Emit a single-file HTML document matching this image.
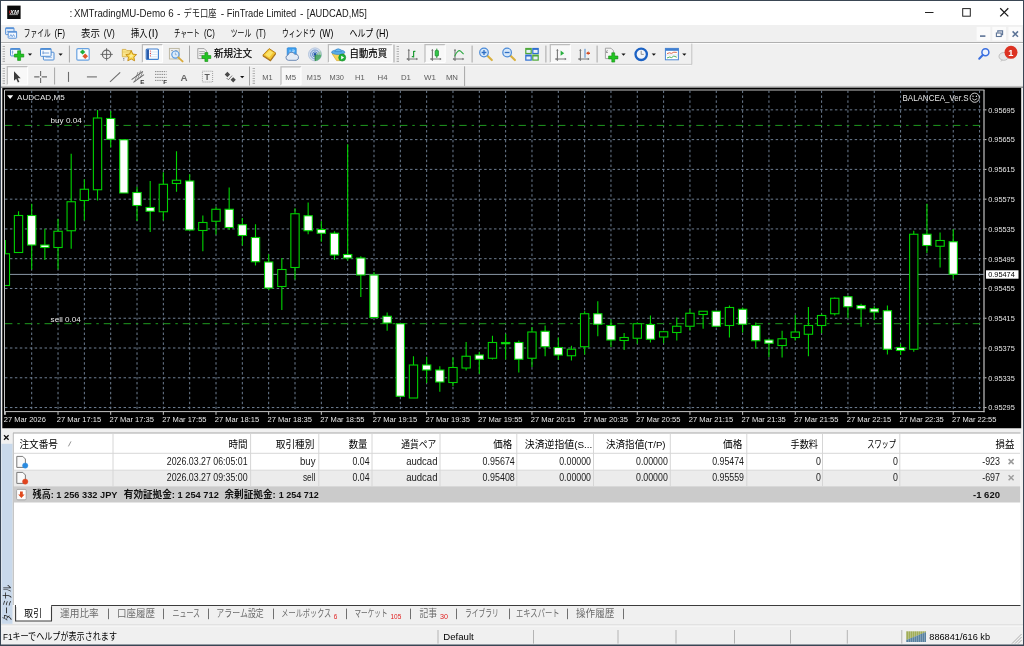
<!DOCTYPE html><html lang="ja"><head><meta charset="utf-8"><title>MT4</title><style>
*{box-sizing:border-box;margin:0;padding:0}
html,body{width:1024px;height:646px;overflow:hidden;background:#f0f0f0;font-family:"Liberation Sans","Noto Sans CJK JP",sans-serif;}
#win{position:absolute;left:0;top:0;width:1024px;height:646px;overflow:hidden;background:#f0f0f0;will-change:transform}
.abs{position:absolute}
svg.chart{position:absolute;left:0;top:0}
svg.chart text.ax{font-family:"Liberation Sans","Noto Sans CJK JP",sans-serif;font-size:7.6px;fill:#e8e8e8}
.t{position:absolute;white-space:nowrap;color:#000;line-height:1}
</style></head><body><div id="win">
<svg class="top" width="1024" height="90" viewBox="0 0 1024 90" font-family='"Liberation Sans","Noto Sans CJK JP",sans-serif' style="position:absolute;left:0;top:0">
<rect x="0" y="0" width="1024" height="25" fill="#ffffff"/>
<rect x="7.2" y="5.6" width="13.4" height="13.4" fill="#0a0a0a"/>
<text x="10" y="13.7" font-size="5" font-weight="bold" font-style="italic" fill="#ececec" textLength="8.8" lengthAdjust="spacingAndGlyphs">XM</text>
<rect x="9.2" y="10.6" width="1.1" height="2.8" fill="#d02020"/>
<rect x="9.4" y="14.2" width="8.6" height="0.9" fill="#a8a8a8"/>
<text x="69.4" y="16.8" font-size="10.3" fill="#1a1a1a">:</text>
<text x="74" y="16.8" font-size="10.3" fill="#1a1a1a" textLength="99.6" lengthAdjust="spacingAndGlyphs">XMTradingMU-Demo 6</text>
<text x="177" y="16.8" font-size="10.3" fill="#1a1a1a">-</text>
<text x="183.4" y="17" font-size="10.2" fill="#1a1a1a" textLength="33" lengthAdjust="spacingAndGlyphs">デモ口座</text>
<text x="220.8" y="16.8" font-size="10.3" fill="#1a1a1a">-</text>
<text x="226.7" y="16.8" font-size="10.3" fill="#1a1a1a" textLength="69.6" lengthAdjust="spacingAndGlyphs">FinTrade Limited</text>
<text x="300" y="16.8" font-size="10.3" fill="#1a1a1a">-</text>
<text x="306.8" y="16.8" font-size="10.3" fill="#1a1a1a" textLength="60" lengthAdjust="spacingAndGlyphs">[AUDCAD,M5]</text>
<line x1="925" y1="12.5" x2="933.5" y2="12.5" stroke="#222" stroke-width="1"/>
<rect x="962.7" y="8.6" width="7.6" height="7.6" fill="none" stroke="#222" stroke-width="1"/>
<path d="M1000.2 8.3 L1008.3 16.4 M1008.3 8.3 L1000.2 16.4" stroke="#1a1a1a" stroke-width="1.25" fill="none"/>
<rect x="0" y="25" width="1024" height="17.2" fill="#f0f0f0"/>
<rect x="5.6" y="27.8" width="8.4" height="6.8" rx="0.6" fill="#eaf2fc" stroke="#5b93d8" stroke-width="1"/>
<rect x="5.6" y="27.6" width="8.4" height="1.5" fill="#5b93d8"/>
<path d="M6.8 32.4 l1 -1.6 l1 1.6" fill="none" stroke="#5b93d8" stroke-width="0.7"/>
<rect x="8.2" y="31.4" width="8.4" height="6.8" rx="0.6" fill="#f4f8fe" stroke="#5b93d8" stroke-width="1"/>
<rect x="8.2" y="31.2" width="8.4" height="1.5" fill="#5b93d8"/>
<path d="M9.6 36.8 l1.3 -2.2 l1.3 2.2 l1.3 -2.2 l1.3 2.2" fill="none" stroke="#5b93d8" stroke-width="0.8"/>
<text x="23.8" y="37.3" font-size="9.9" fill="#000" textLength="26.8" lengthAdjust="spacingAndGlyphs">ファイル</text>
<text x="54.4" y="37.1" font-size="10.2" fill="#000" textLength="10.6" lengthAdjust="spacingAndGlyphs">(F)</text>
<text x="81" y="37.3" font-size="9.9" fill="#000" textLength="19" lengthAdjust="spacingAndGlyphs">表示</text>
<text x="103.8" y="37.1" font-size="10.2" fill="#000" textLength="11" lengthAdjust="spacingAndGlyphs">(V)</text>
<text x="131.1" y="37.3" font-size="9.9" fill="#000" textLength="16.4" lengthAdjust="spacingAndGlyphs">挿入</text>
<text x="148.3" y="37.1" font-size="10.2" fill="#000" textLength="9.8" lengthAdjust="spacingAndGlyphs">(I)</text>
<text x="174" y="37.3" font-size="9.9" fill="#000" textLength="25.8" lengthAdjust="spacingAndGlyphs">チャート</text>
<text x="204" y="37.1" font-size="10.2" fill="#000" textLength="10.7" lengthAdjust="spacingAndGlyphs">(C)</text>
<text x="230.8" y="37.3" font-size="9.9" fill="#000" textLength="20.4" lengthAdjust="spacingAndGlyphs">ツール</text>
<text x="256" y="37.1" font-size="10.2" fill="#000" textLength="9.7" lengthAdjust="spacingAndGlyphs">(T)</text>
<text x="282" y="37.3" font-size="9.9" fill="#000" textLength="33.8" lengthAdjust="spacingAndGlyphs">ウィンドウ</text>
<text x="319.5" y="37.1" font-size="10.2" fill="#000" textLength="13.9" lengthAdjust="spacingAndGlyphs">(W)</text>
<text x="349.5" y="37.3" font-size="9.9" fill="#000" textLength="23.8" lengthAdjust="spacingAndGlyphs">ヘルプ</text>
<text x="376" y="37.1" font-size="10.2" fill="#000" textLength="12.5" lengthAdjust="spacingAndGlyphs">(H)</text>
<rect x="976.6" y="26.9" width="13.8" height="13.7" fill="#fbfbfb"/>
<rect x="992.3" y="26.9" width="13.7" height="13.7" fill="#fbfbfb"/>
<rect x="1008.4" y="26.9" width="13.2" height="13.7" fill="#fbfbfb"/>
<rect x="980" y="35.3" width="5.4" height="1.6" fill="#5c7396"/>
<path d="M997.8 32.4 V30.9 H1002.6 V34.6 H1001.2" fill="none" stroke="#5c7396" stroke-width="1.1"/>
<rect x="996.4" y="33" width="4.8" height="3.5" fill="none" stroke="#5c7396" stroke-width="1.1"/>
<path d="M1012.6 31.4 L1018 36.8 M1018 31.4 L1012.6 36.8" stroke="#5c7396" stroke-width="1.5" fill="none"/>
<line x1="1" y1="42.5" x2="1023" y2="42.5" stroke="#b0b0b0" stroke-width="1"/>
<line x1="1" y1="43.5" x2="1023" y2="43.5" stroke="#fcfcfc" stroke-width="1"/>
<line x1="3.8" y1="46" x2="3.8" y2="62" stroke="#b0b0b0" stroke-width="2.4" stroke-dasharray="1.1 1.37"/>
<rect x="10.5" y="48.5" width="9.6" height="7.4" rx="0.8" fill="#f6fafe" stroke="#4e8cd4" stroke-width="1"/>
<rect x="10.5" y="48.3" width="9.6" height="1.6" fill="#4e8cd4"/>
<path d="M12.5 50.6 v4 M11.7 52 h1.8" stroke="#6a9ad6" stroke-width="0.7" fill="none"/>
<path d="M17.6 50.8 h3 v3.3 h3.2 v3 h-3.2 v3.3 h-3 v-3.3 h-3.2 v-3 h3.2z" fill="#22c422" stroke="#128a12" stroke-width="0.6"/>
<path d="M27.9 53.5 h4.2 l-2.1 2.2z" fill="#111"/>
<rect x="43.4" y="52.2" width="10.6" height="7.8" rx="0.8" fill="#eef4fc" stroke="#4e8cd4" stroke-width="1"/>
<rect x="40.5" y="48.5" width="10.6" height="7.8" rx="0.8" fill="#f6fafe" stroke="#4e8cd4" stroke-width="1"/>
<rect x="40.5" y="48.3" width="10.6" height="1.6" fill="#4e8cd4"/>
<path d="M42.5 53 h6.6 M43.1 50.8 v3.4" stroke="#5a8ed2" stroke-width="0.8" fill="none"/>
<path d="M45.5 57.4 h6.4" stroke="#7aa6dc" stroke-width="0.7" fill="none"/>
<path d="M58.5 53.5 h4.2 l-2.1 2.2z" fill="#111"/>
<line x1="69.4" y1="45.6" x2="69.4" y2="62.5" stroke="#a6a6a6" stroke-width="1"/>
<rect x="76.8" y="48.6" width="12.4" height="11.6" rx="1.2" fill="#f7fbff" stroke="#6aa2e0" stroke-width="1.2"/>
<path d="M82.6 49.4 l2.7 2.5 l-2.7 2.5 l-2.7 -2.5z" fill="#1fae3a"/>
<path d="M85.2 53.6 l2.8 2.7 l-2.8 2.7 l-2.8 -2.7z" fill="#e2562a"/>
<circle cx="106.6" cy="54.4" r="4.2" fill="none" stroke="#6a6a6a" stroke-width="1.2"/>
<path d="M106.6 48.2 v12.4 M100.4 54.4 h12.4" stroke="#5e5e5e" stroke-width="0.9" fill="none"/>
<path d="M122.3 49.4 h3.6 l1 1.2 h4.8 v6.2 h-9.4z" fill="#f9e48c" stroke="#d2aa3c" stroke-width="0.8"/>
<path d="M122.6 52 h9" stroke="#e6c85a" stroke-width="0.7"/>
<path d="M123.8 58 v2.8" stroke="#444" stroke-width="0.8" stroke-dasharray="0.9 0.7"/>
<path d="M131.2 50.8 l1.7 3.3 l3.7 0.5 l-2.7 2.5 l0.7 3.7 l-3.4 -1.8 l-3.4 1.8 l0.7 -3.7 l-2.7 -2.5 l3.7 -0.5z" fill="#f8d648" stroke="#c48a14" stroke-width="0.9"/>
<path d="M131.2 53.4 l0.8 1.6 l1.7 0.2 l-1.3 1.2 l0.3 1.7 l-1.5 -0.9 l-1.5 0.9 l0.3 -1.7 l-1.3 -1.2 l1.7 -0.2z" fill="#fcec98"/>
<rect x="142.4" y="44.6" width="20.19999999999999" height="17.799999999999997" fill="#f8f8f8"/>
<path d="M142.4 62.4 V44.6 H162.6" fill="none" stroke="#bcbcbc" stroke-width="1.2"/>
<path d="M142.4 62.4 H162.6 V44.6" fill="none" stroke="#ffffff" stroke-width="1"/>
<rect x="146.2" y="49" width="12.2" height="10.4" rx="1" fill="#ffffff" stroke="#3f7fd0" stroke-width="1.1"/>
<rect x="146.6" y="49.4" width="2.4" height="9.6" fill="#2a5caa"/>
<path d="M150 52 h7.6 M150 54.4 h7.6 M150 56.8 h7.6" stroke="#c7d8f2" stroke-width="0.7"/>
<circle cx="150.4" cy="51" r="0.6" fill="#e03030"/><circle cx="150.4" cy="53.4" r="0.6" fill="#e03030"/><circle cx="150.4" cy="55.8" r="0.6" fill="#e03030"/>
<rect x="169.4" y="48.4" width="9.8" height="10.6" fill="#efefef" stroke="#b9b39c" stroke-width="0.9"/>
<path d="M171 50.6 h2 M175 50.6 h2.4" stroke="#8a8a8a" stroke-width="0.7"/>
<circle cx="175.4" cy="54.6" r="3.6" fill="#dcecfb" stroke="#5b9be0" stroke-width="1.2"/>
<path d="M175.4 52.6 v2.2 h1.4" stroke="#7a9cc8" stroke-width="0.7" fill="none"/>
<path d="M178.2 57.4 l4.4 4" stroke="#d9a93a" stroke-width="1.9" stroke-linecap="round"/>
<line x1="189.5" y1="45.6" x2="189.5" y2="62.5" stroke="#a6a6a6" stroke-width="1"/>
<path d="M197.8 48.6 h6.4 l2.4 2.4 v7.6 h-8.8z" fill="#f2f2f2" stroke="#9a9a9a" stroke-width="0.9"/>
<path d="M199.2 51.6 h5.6 M199.2 53.6 h5.6 M199.2 55.6 h3" stroke="#8a8a8a" stroke-width="0.7"/>
<path d="M204.9 52.6 h2.9 v3 h3 v2.9 h-3 v3 h-2.9 v-3 h-3 v-2.9 h3z" fill="#22c422" stroke="#128a12" stroke-width="0.6"/>
<text x="213.9" y="57.3" font-size="10.1" fill="#000" textLength="38.2" lengthAdjust="spacingAndGlyphs" stroke="#000" stroke-width="0.2">新規注文</text>
<path d="M262.8 55.2 l6.4 -6.6 l6.6 4.4 l-5.4 7.2z" fill="#f4c430" stroke="#b07a18" stroke-width="0.9"/>
<path d="M262.8 55.2 l7.6 5 l5.4 -7.2 v1.6 l-5.2 7 l-7.8 -5z" fill="#a8701a"/>
<path d="M265.2 54.8 l4.4 -4.6 l3.6 2.4 l-4 4.8z" fill="#fbe36a"/>
<rect x="287.2" y="47.8" width="9" height="7.6" rx="0.8" fill="#3ea2f2" stroke="#2a80d0" stroke-width="0.7"/>
<path d="M290 49.8 v3.4 M292.2 50 h2 v1.6 h-2 v1.8 h2" stroke="#d6ecff" stroke-width="0.7" fill="none"/>
<path d="M288.4 60.3 a2.7 2.7 0 0 1 -0.4 -5.3 a3.5 3.5 0 0 1 6.6 -0.8 a3 3 0 0 1 1.6 6.1z" fill="#e4ebf5" stroke="#5f7fae" stroke-width="0.9"/>
<circle cx="315" cy="54.4" r="6.5" fill="#d5e0f0" stroke="#a9bcd8" stroke-width="0.8"/>
<circle cx="315" cy="54.4" r="4.4" fill="none" stroke="#7097d0" stroke-width="1"/>
<circle cx="315" cy="54.4" r="2.5" fill="none" stroke="#4f7fc6" stroke-width="1"/>
<path d="M315 54.4 L321.5 54.4 A6.5 6.5 0 0 1 315 60.9z" fill="#48a862" fill-opacity="0.9"/>
<path d="M315 54.4 L320.6 51 A6.5 6.5 0 0 1 321.5 54.4z" fill="#9cc8a4" fill-opacity="0.8"/>
<circle cx="315" cy="54.4" r="1.3" fill="#1f52a8"/>
<path d="M315.2 55 v5.9" stroke="#2f8044" stroke-width="1"/>
<rect x="328.4" y="44.6" width="63.80000000000001" height="17.799999999999997" fill="#f8f8f8"/>
<path d="M328.4 62.4 V44.6 H392.2" fill="none" stroke="#bcbcbc" stroke-width="1.2"/>
<path d="M328.4 62.4 H392.2 V44.6" fill="none" stroke="#ffffff" stroke-width="1"/>
<path d="M332 53.6 l6 -2 l6.2 2 l-4 7 h-3.6z" fill="#f6d458" stroke="#d4a628" stroke-width="0.7"/>
<ellipse cx="338.2" cy="52.2" rx="6.6" ry="2.3" fill="#58aee8" stroke="#3a86c8" stroke-width="0.7"/>
<path d="M334.8 51.6 a3.5 3.6 0 0 1 6.8 0z" fill="#6abaf0" stroke="#3a86c8" stroke-width="0.7"/>
<circle cx="342.2" cy="57.6" r="3.5" fill="#1fb038" stroke="#108a22" stroke-width="0.6"/>
<path d="M341.2 55.8 l2.9 1.8 l-2.9 1.8z" fill="#fff"/>
<text x="349.6" y="57.4" font-size="10.2" fill="#000" textLength="37.5" lengthAdjust="spacingAndGlyphs" stroke="#000" stroke-width="0.2">自動売買</text>
<line x1="394" y1="44.6" x2="394" y2="62.4" stroke="#a6a6a6" stroke-width="1"/>
<line x1="397.8" y1="46" x2="397.8" y2="62" stroke="#b0b0b0" stroke-width="2.4" stroke-dasharray="1.1 1.37"/>
<path d="M408.8 49.6 v11 M406.8 59.0 h10.6" stroke="#777" stroke-width="1.1" fill="none"/>
<path d="M408.8 49.0 l-1.2 1.8 h2.4z M418.0 59.0 l-1.8 -1.2 v2.4z M406.40000000000003 59.0 l1.6 -1.1 v2.2z M408.8 61.0 l-1.1 -1.5 h2.2z" fill="#777"/>
<path d="M413.6 51 v6.4 M413.6 51.4 h1.8 M411.8 56.6 h1.8" stroke="#1f9c36" stroke-width="1.2" fill="none"/>
<rect x="425" y="44.6" width="20.19999999999999" height="17.799999999999997" fill="#f8f8f8"/>
<path d="M425 62.4 V44.6 H445.2" fill="none" stroke="#bcbcbc" stroke-width="1.2"/>
<path d="M425 62.4 H445.2 V44.6" fill="none" stroke="#ffffff" stroke-width="1"/>
<path d="M432.4 49.6 v11 M430.4 59.0 h10.6" stroke="#777" stroke-width="1.1" fill="none"/>
<path d="M432.4 49.0 l-1.2 1.8 h2.4z M441.59999999999997 59.0 l-1.8 -1.2 v2.4z M430.0 59.0 l1.6 -1.1 v2.2z M432.4 61.0 l-1.1 -1.5 h2.2z" fill="#777"/>
<rect x="435.2" y="50.4" width="3.2" height="5.6" rx="0.6" fill="#35c84a" stroke="#178a2a" stroke-width="0.8"/>
<path d="M436.8 48.6 v1.8 M436.8 56 v2" stroke="#178a2a" stroke-width="0.9"/>
<path d="M455 49.6 v11 M453 59.0 h10.6" stroke="#777" stroke-width="1.1" fill="none"/>
<path d="M455 49.0 l-1.2 1.8 h2.4z M464.2 59.0 l-1.8 -1.2 v2.4z M452.6 59.0 l1.6 -1.1 v2.2z M455 61.0 l-1.1 -1.5 h2.2z" fill="#777"/>
<path d="M454.6 56.4 q3.4 -7.6 6 -5.2 q1.6 1.6 3 3" stroke="#2aa840" stroke-width="1.1" fill="none"/>
<line x1="472.1" y1="45.6" x2="472.1" y2="62.5" stroke="#a6a6a6" stroke-width="1"/>
<path d="M487.4 55.8 l4.4 4.2" stroke="#d8b040" stroke-width="2.2" stroke-linecap="round"/>
<circle cx="484" cy="52.5" r="4.3" fill="#d6e8fa" stroke="#4a8ad8" stroke-width="1.2"/>
<path d="M481.6 52.5 h4.8 M484 50.1 v4.8" stroke="#2f6fc4" stroke-width="1.3"/>
<path d="M510.5 55.8 l4.4 4.2" stroke="#d8b040" stroke-width="2.2" stroke-linecap="round"/>
<circle cx="507.1" cy="52.5" r="4.3" fill="#d6e8fa" stroke="#4a8ad8" stroke-width="1.2"/>
<path d="M504.70000000000005 52.5 h4.8" stroke="#2f6fc4" stroke-width="1.3"/>
<rect x="525.2" y="47.9" width="6.6" height="6.2" fill="#4ea83a"/>
<rect x="526.4000000000001" y="49.9" width="4.2" height="3" fill="#e8f0fa"/>
<rect x="532.2" y="47.9" width="6.6" height="6.2" fill="#2f6fd0"/>
<rect x="533.4000000000001" y="49.9" width="4.2" height="3" fill="#e8f0fa"/>
<rect x="525.2" y="54.5" width="6.6" height="6.2" fill="#2f6fd0"/>
<rect x="526.4000000000001" y="56.5" width="4.2" height="3" fill="#e8f0fa"/>
<rect x="532.2" y="54.5" width="6.6" height="6.2" fill="#4ea83a"/>
<rect x="533.4000000000001" y="56.5" width="4.2" height="3" fill="#e8f0fa"/>
<line x1="545.9" y1="45.6" x2="545.9" y2="62.5" stroke="#a6a6a6" stroke-width="1"/>
<rect x="550.3" y="44.6" width="20.0" height="17.799999999999997" fill="#f8f8f8"/>
<path d="M550.3 62.4 V44.6 H570.3" fill="none" stroke="#bcbcbc" stroke-width="1.2"/>
<path d="M550.3 62.4 H570.3 V44.6" fill="none" stroke="#ffffff" stroke-width="1"/>
<path d="M557.4 49.6 v11 M555.4 59.0 h10.6" stroke="#777" stroke-width="1.1" fill="none"/>
<path d="M557.4 49.0 l-1.2 1.8 h2.4z M566.6 59.0 l-1.8 -1.2 v2.4z M555.0 59.0 l1.6 -1.1 v2.2z M557.4 61.0 l-1.1 -1.5 h2.2z" fill="#777"/>
<path d="M560.6 50.6 l3.6 2.6 l-3.6 2.6z" fill="#2ab040"/>
<path d="M580.4 49.6 v11 M578.4 59.0 h10.6" stroke="#777" stroke-width="1.1" fill="none"/>
<path d="M580.4 49.0 l-1.2 1.8 h2.4z M589.6 59.0 l-1.8 -1.2 v2.4z M578.0 59.0 l1.6 -1.1 v2.2z M580.4 61.0 l-1.1 -1.5 h2.2z" fill="#777"/>
<path d="M585 48.8 v9" stroke="#4a86c8" stroke-width="1"/>
<path d="M586 53.2 l2.6 -1.9 v1.2 h1.4 v1.4 h-1.4 v1.2z" fill="#d24a20"/>
<line x1="597.1" y1="45.6" x2="597.1" y2="62.5" stroke="#a6a6a6" stroke-width="1"/>
<path d="M605.4 48.2 h5.6 l2.4 2.4 v8 h-8z" fill="#f4f4f4" stroke="#9a9a9a" stroke-width="0.9"/>
<path d="M607.6 50.4 q-1 0 -1 1 v1.4 M608 52.4 h-1.8" stroke="#777" stroke-width="0.7" fill="none"/>
<path d="M611.8 52.8 h2.9 v3.2 h3.2 v2.9 h-3.2 v3.2 h-2.9 v-3.2 h-3.2 v-2.9 h3.2z" fill="#22c422" stroke="#128a12" stroke-width="0.6"/>
<path d="M621.4 53.5 h4.2 l-2.1 2.2z" fill="#111"/>
<circle cx="641.2" cy="54.3" r="5.7" fill="#f2f5fa" stroke="#1c62c4" stroke-width="2.3"/>
<path d="M641.2 50.8 v3.6 h2.6" stroke="#8a8a8a" stroke-width="0.9" fill="none"/>
<path d="M651.6999999999999 53.5 h4.2 l-2.1 2.2z" fill="#111"/>
<rect x="665.4" y="48.4" width="13" height="11.4" fill="#ffffff" stroke="#4a86d4" stroke-width="1"/>
<rect x="665.4" y="48.4" width="13" height="2.4" fill="#3f7fd0"/>
<path d="M667 53.6 l2.4 -0.8 l2 0.6 l2.4 -1.2 l3 0.2" stroke="#d85a3a" stroke-width="0.9" fill="none"/>
<path d="M667 58 l2.6 -1 l2 0.6 l2.2 -1.6 l3 1.2" stroke="#3aa84a" stroke-width="0.9" fill="none"/>
<path d="M666 55 h12" stroke="#c4d4ea" stroke-width="0.6"/>
<path d="M682.1999999999999 53.5 h4.2 l-2.1 2.2z" fill="#111"/>
<path d="M1 64.4 H691.8 V43.6" fill="none" stroke="#c2c2c2" stroke-width="1"/>
<path d="M1 65.3 H691" fill="none" stroke="#fbfbfb" stroke-width="0.8"/>
<circle cx="985.4" cy="52.2" r="3.5" fill="#eef4ff" stroke="#3a6fe0" stroke-width="1.5"/>
<path d="M982.8 55 l-3.6 3.8" stroke="#3a6fe0" stroke-width="2" stroke-linecap="round"/>
<ellipse cx="1003.8" cy="56.4" rx="4.8" ry="3.9" fill="#e6e6e6" stroke="#b4b4b4" stroke-width="0.8"/>
<path d="M1001.4 59.4 l-1 2.6 l3 -2z" fill="#c8c8c8"/>
<circle cx="1011" cy="52.3" r="6.5" fill="#dc3222"/>
<text x="1010.8" y="55.6" font-size="9.2" font-weight="bold" fill="#fff" text-anchor="middle">1</text>
<line x1="3.8" y1="68" x2="3.8" y2="84" stroke="#b0b0b0" stroke-width="2.4" stroke-dasharray="1.1 1.37"/>
<rect x="7.3" y="66.6" width="20.4" height="18.200000000000003" fill="#f8f8f8"/>
<path d="M7.3 84.8 V66.6 H27.7" fill="none" stroke="#bcbcbc" stroke-width="1.2"/>
<path d="M7.3 84.8 H27.7 V66.6" fill="none" stroke="#ffffff" stroke-width="1"/>
<path d="M14 71.2 v9.6 l2.2 -2 l1.7 3.7 l1.5 -0.7 l-1.7 -3.6 h3z" fill="#3c3c3c"/>
<path d="M40.6 71.1 v4.9 M40.6 77.9 v5 M34.2 76.9 h5.3 M41.7 76.9 h5.3" stroke="#6c6c6c" stroke-width="1.1" fill="none"/>
<line x1="54.6" y1="67.5" x2="54.6" y2="84.5" stroke="#a6a6a6" stroke-width="1"/>
<path d="M68.5 71.9 v10" stroke="#6c6c6c" stroke-width="1.1"/>
<path d="M86.9 76.9 h10" stroke="#6c6c6c" stroke-width="1.1"/>
<path d="M110 81.9 L120.2 72.4" stroke="#6c6c6c" stroke-width="1.1"/>
<path d="M131.6 79.6 L142.8 71.4 M133.4 82.4 L144 74.6" stroke="#6c6c6c" stroke-width="1.1"/>
<path d="M134.6 82 L138 72 M137.4 80 L140.6 70.6 M140.2 78 L142.6 71.6" stroke="#6c6c6c" stroke-width="0.7"/>
<text x="140.2" y="84" font-size="6.2" font-weight="bold" fill="#333">E</text>
<path d="M155 71.6 h11.6 M155 74.4 h11.6 M155 77.4 h11.6 M155 80.4 h8" stroke="#6c6c6c" stroke-width="0.8" stroke-dasharray="1.4 0.8"/>
<text x="163.2" y="84" font-size="6.2" font-weight="bold" fill="#333">F</text>
<text x="180.5" y="80.8" font-size="9.8" font-weight="bold" fill="#686868">A</text>
<rect x="202.4" y="71.2" width="10.2" height="10.8" fill="none" stroke="#8a8a8a" stroke-width="0.8" stroke-dasharray="1 1"/>
<text x="204.6" y="80" font-size="8.6" font-weight="bold" fill="#5c5c5c">T</text>
<path d="M227.4 71.8 l2.7 2.7 l-2.7 2.7 l-2.7 -2.7z M233.2 77.2 l2.6 2.6 l-2.6 2.6 l-2.6 -2.6z" fill="#4a4a4a"/>
<path d="M226.6 78 l1.8 1.8 l3.6 -4.2" stroke="#5a5a5a" stroke-width="0.8" fill="none"/>
<path d="M240.1 76 h4.2 l-2.1 2.2z" fill="#111"/>
<line x1="249.5" y1="66.5" x2="249.5" y2="85.6" stroke="#a6a6a6" stroke-width="1"/>
<line x1="253.8" y1="68" x2="253.8" y2="84" stroke="#b0b0b0" stroke-width="2.4" stroke-dasharray="1.1 1.37"/>
<text x="262.2" y="79.8" font-size="8.1" fill="#5a5a5a" textLength="10.4" lengthAdjust="spacingAndGlyphs">M1</text>
<rect x="281" y="66.9" width="20" height="18.099999999999994" fill="#f8f8f8"/>
<path d="M281 85 V66.9 H301" fill="none" stroke="#bcbcbc" stroke-width="1.2"/>
<path d="M281 85 H301 V66.9" fill="none" stroke="#ffffff" stroke-width="1"/>
<text x="285.2" y="79.8" font-size="8.1" fill="#5a5a5a" textLength="10.8" lengthAdjust="spacingAndGlyphs">M5</text>
<text x="306.8" y="79.8" font-size="8.1" fill="#5a5a5a" textLength="14.2" lengthAdjust="spacingAndGlyphs">M15</text>
<text x="329.5" y="79.8" font-size="8.1" fill="#5a5a5a" textLength="14.4" lengthAdjust="spacingAndGlyphs">M30</text>
<text x="355" y="79.8" font-size="8.1" fill="#5a5a5a" textLength="9.6" lengthAdjust="spacingAndGlyphs">H1</text>
<text x="377.5" y="79.8" font-size="8.1" fill="#5a5a5a" textLength="10" lengthAdjust="spacingAndGlyphs">H4</text>
<text x="400.9" y="79.8" font-size="8.1" fill="#5a5a5a" textLength="10" lengthAdjust="spacingAndGlyphs">D1</text>
<text x="424" y="79.8" font-size="8.1" fill="#5a5a5a" textLength="11.9" lengthAdjust="spacingAndGlyphs">W1</text>
<text x="445.9" y="79.8" font-size="8.1" fill="#5a5a5a" textLength="12.1" lengthAdjust="spacingAndGlyphs">MN</text>
<line x1="464.6" y1="66.3" x2="464.6" y2="86" stroke="#a6a6a6" stroke-width="1"/>
<rect x="1" y="85.9" width="1022" height="0.8" fill="#d0d0d0"/>
<rect x="1" y="86.6" width="1022" height="1.4" fill="#9a9a9a"/>
</svg>
<svg class="chart" width="1024" height="646" viewBox="0 0 1024 646"><rect x="2.3" y="87.9" width="1018.9" height="340.6" fill="#000"/>
<defs><clipPath id="plot"><rect x="5" y="90.5" width="979" height="320.5"/></clipPath></defs>
<g clip-path="url(#plot)">
<line x1="5" y1="109.85" x2="984" y2="109.85" stroke="#6e7e92" stroke-width="1" stroke-dasharray="2.47 2.47"/>
<line x1="5" y1="139.62" x2="984" y2="139.62" stroke="#6e7e92" stroke-width="1" stroke-dasharray="2.47 2.47"/>
<line x1="5" y1="169.39" x2="984" y2="169.39" stroke="#6e7e92" stroke-width="1" stroke-dasharray="2.47 2.47"/>
<line x1="5" y1="199.16" x2="984" y2="199.16" stroke="#6e7e92" stroke-width="1" stroke-dasharray="2.47 2.47"/>
<line x1="5" y1="228.93" x2="984" y2="228.93" stroke="#6e7e92" stroke-width="1" stroke-dasharray="2.47 2.47"/>
<line x1="5" y1="258.70" x2="984" y2="258.70" stroke="#6e7e92" stroke-width="1" stroke-dasharray="2.47 2.47"/>
<line x1="5" y1="288.47" x2="984" y2="288.47" stroke="#6e7e92" stroke-width="1" stroke-dasharray="2.47 2.47"/>
<line x1="84" y1="318.24" x2="984" y2="318.24" stroke="#6e7e92" stroke-width="1" stroke-dasharray="2.47 2.47"/>
<line x1="5" y1="348.01" x2="984" y2="348.01" stroke="#6e7e92" stroke-width="1" stroke-dasharray="2.47 2.47"/>
<line x1="5" y1="377.78" x2="984" y2="377.78" stroke="#6e7e92" stroke-width="1" stroke-dasharray="2.47 2.47"/>
<line x1="5" y1="407.55" x2="984" y2="407.55" stroke="#6e7e92" stroke-width="1" stroke-dasharray="2.47 2.47"/>
<line x1="31.70" y1="90.5" x2="31.70" y2="411" stroke="#6e7e92" stroke-width="1" stroke-dasharray="2.47 2.47"/>
<line x1="58.03" y1="90.5" x2="58.03" y2="411" stroke="#6e7e92" stroke-width="1" stroke-dasharray="2.47 2.47"/>
<line x1="84.36" y1="90.5" x2="84.36" y2="411" stroke="#6e7e92" stroke-width="1" stroke-dasharray="2.47 2.47"/>
<line x1="110.69" y1="90.5" x2="110.69" y2="411" stroke="#6e7e92" stroke-width="1" stroke-dasharray="2.47 2.47"/>
<line x1="137.02" y1="90.5" x2="137.02" y2="411" stroke="#6e7e92" stroke-width="1" stroke-dasharray="2.47 2.47"/>
<line x1="163.35" y1="90.5" x2="163.35" y2="411" stroke="#6e7e92" stroke-width="1" stroke-dasharray="2.47 2.47"/>
<line x1="189.68" y1="90.5" x2="189.68" y2="411" stroke="#6e7e92" stroke-width="1" stroke-dasharray="2.47 2.47"/>
<line x1="216.01" y1="90.5" x2="216.01" y2="411" stroke="#6e7e92" stroke-width="1" stroke-dasharray="2.47 2.47"/>
<line x1="242.34" y1="90.5" x2="242.34" y2="411" stroke="#6e7e92" stroke-width="1" stroke-dasharray="2.47 2.47"/>
<line x1="268.67" y1="90.5" x2="268.67" y2="411" stroke="#6e7e92" stroke-width="1" stroke-dasharray="2.47 2.47"/>
<line x1="295.00" y1="90.5" x2="295.00" y2="411" stroke="#6e7e92" stroke-width="1" stroke-dasharray="2.47 2.47"/>
<line x1="321.33" y1="90.5" x2="321.33" y2="411" stroke="#6e7e92" stroke-width="1" stroke-dasharray="2.47 2.47"/>
<line x1="347.66" y1="90.5" x2="347.66" y2="411" stroke="#6e7e92" stroke-width="1" stroke-dasharray="2.47 2.47"/>
<line x1="373.99" y1="90.5" x2="373.99" y2="411" stroke="#6e7e92" stroke-width="1" stroke-dasharray="2.47 2.47"/>
<line x1="400.32" y1="90.5" x2="400.32" y2="411" stroke="#6e7e92" stroke-width="1" stroke-dasharray="2.47 2.47"/>
<line x1="426.65" y1="90.5" x2="426.65" y2="411" stroke="#6e7e92" stroke-width="1" stroke-dasharray="2.47 2.47"/>
<line x1="452.98" y1="90.5" x2="452.98" y2="411" stroke="#6e7e92" stroke-width="1" stroke-dasharray="2.47 2.47"/>
<line x1="479.31" y1="90.5" x2="479.31" y2="411" stroke="#6e7e92" stroke-width="1" stroke-dasharray="2.47 2.47"/>
<line x1="505.64" y1="90.5" x2="505.64" y2="411" stroke="#6e7e92" stroke-width="1" stroke-dasharray="2.47 2.47"/>
<line x1="531.97" y1="90.5" x2="531.97" y2="411" stroke="#6e7e92" stroke-width="1" stroke-dasharray="2.47 2.47"/>
<line x1="558.30" y1="90.5" x2="558.30" y2="411" stroke="#6e7e92" stroke-width="1" stroke-dasharray="2.47 2.47"/>
<line x1="584.63" y1="90.5" x2="584.63" y2="411" stroke="#6e7e92" stroke-width="1" stroke-dasharray="2.47 2.47"/>
<line x1="610.96" y1="90.5" x2="610.96" y2="411" stroke="#6e7e92" stroke-width="1" stroke-dasharray="2.47 2.47"/>
<line x1="637.29" y1="90.5" x2="637.29" y2="411" stroke="#6e7e92" stroke-width="1" stroke-dasharray="2.47 2.47"/>
<line x1="663.62" y1="90.5" x2="663.62" y2="411" stroke="#6e7e92" stroke-width="1" stroke-dasharray="2.47 2.47"/>
<line x1="689.95" y1="90.5" x2="689.95" y2="411" stroke="#6e7e92" stroke-width="1" stroke-dasharray="2.47 2.47"/>
<line x1="716.28" y1="90.5" x2="716.28" y2="411" stroke="#6e7e92" stroke-width="1" stroke-dasharray="2.47 2.47"/>
<line x1="742.61" y1="90.5" x2="742.61" y2="411" stroke="#6e7e92" stroke-width="1" stroke-dasharray="2.47 2.47"/>
<line x1="768.94" y1="90.5" x2="768.94" y2="411" stroke="#6e7e92" stroke-width="1" stroke-dasharray="2.47 2.47"/>
<line x1="795.27" y1="90.5" x2="795.27" y2="411" stroke="#6e7e92" stroke-width="1" stroke-dasharray="2.47 2.47"/>
<line x1="821.60" y1="90.5" x2="821.60" y2="411" stroke="#6e7e92" stroke-width="1" stroke-dasharray="2.47 2.47"/>
<line x1="847.93" y1="90.5" x2="847.93" y2="411" stroke="#6e7e92" stroke-width="1" stroke-dasharray="2.47 2.47"/>
<line x1="874.26" y1="90.5" x2="874.26" y2="411" stroke="#6e7e92" stroke-width="1" stroke-dasharray="2.47 2.47"/>
<line x1="900.59" y1="90.5" x2="900.59" y2="411" stroke="#6e7e92" stroke-width="1" stroke-dasharray="2.47 2.47"/>
<line x1="926.92" y1="90.5" x2="926.92" y2="411" stroke="#6e7e92" stroke-width="1" stroke-dasharray="2.47 2.47"/>
<line x1="953.25" y1="90.5" x2="953.25" y2="411" stroke="#6e7e92" stroke-width="1" stroke-dasharray="2.47 2.47"/>
<line x1="979.58" y1="90.5" x2="979.58" y2="411" stroke="#6e7e92" stroke-width="1" stroke-dasharray="2.47 2.47"/>
<line x1="5" y1="274.4" x2="984" y2="274.4" stroke="#8a97a6" stroke-width="1"/>
<line x1="5" y1="125.4" x2="984" y2="125.4" stroke="#1f9a1f" stroke-width="1" stroke-dasharray="7.4 4.94 2.47 4.94"/>
<line x1="5" y1="323.7" x2="984" y2="323.7" stroke="#1f9a1f" stroke-width="1" stroke-dasharray="7.4 4.94 2.47 4.94"/>
<line x1="5.37" y1="240" x2="5.37" y2="285.5" stroke="#00d200" stroke-width="1.12"/>
<rect x="1.22" y="253.75" width="8.3" height="31.75" fill="#000" stroke="#00d200" stroke-width="1.1"/>
<line x1="18.54" y1="211.25" x2="18.54" y2="252.5" stroke="#00d200" stroke-width="1.12"/>
<rect x="14.38" y="215.5" width="8.3" height="37.00" fill="#000" stroke="#00d200" stroke-width="1.1"/>
<line x1="31.70" y1="203.75" x2="31.70" y2="269.5" stroke="#00d200" stroke-width="1.12"/>
<rect x="27.55" y="215.5" width="8.3" height="29.50" fill="#fff" stroke="#00d200" stroke-width="1.1"/>
<line x1="44.86" y1="228.75" x2="44.86" y2="260" stroke="#00d200" stroke-width="1.12"/>
<rect x="40.71" y="245" width="8.3" height="2.50" fill="#fff" stroke="#00d200" stroke-width="1.1"/>
<line x1="58.03" y1="218.75" x2="58.03" y2="269.5" stroke="#00d200" stroke-width="1.12"/>
<rect x="53.88" y="231.25" width="8.3" height="16.25" fill="#000" stroke="#00d200" stroke-width="1.1"/>
<line x1="71.19" y1="153.75" x2="71.19" y2="248.75" stroke="#00d200" stroke-width="1.12"/>
<rect x="67.04" y="201.75" width="8.3" height="29.00" fill="#000" stroke="#00d200" stroke-width="1.1"/>
<line x1="84.36" y1="179.25" x2="84.36" y2="220.5" stroke="#00d200" stroke-width="1.12"/>
<rect x="80.21" y="189.25" width="8.3" height="11.25" fill="#000" stroke="#00d200" stroke-width="1.1"/>
<line x1="97.53" y1="110" x2="97.53" y2="200.5" stroke="#00d200" stroke-width="1.12"/>
<rect x="93.38" y="118" width="8.3" height="71.75" fill="#000" stroke="#00d200" stroke-width="1.1"/>
<line x1="110.69" y1="111" x2="110.69" y2="147.5" stroke="#00d200" stroke-width="1.12"/>
<rect x="106.54" y="118.5" width="8.3" height="20.75" fill="#fff" stroke="#00d200" stroke-width="1.1"/>
<line x1="123.85" y1="139.5" x2="123.85" y2="193" stroke="#00d200" stroke-width="1.12"/>
<rect x="119.70" y="139.75" width="8.3" height="53.25" fill="#fff" stroke="#00d200" stroke-width="1.1"/>
<line x1="137.02" y1="186.75" x2="137.02" y2="221" stroke="#00d200" stroke-width="1.12"/>
<rect x="132.87" y="192.5" width="8.3" height="13.00" fill="#fff" stroke="#00d200" stroke-width="1.1"/>
<line x1="150.19" y1="181" x2="150.19" y2="232" stroke="#00d200" stroke-width="1.12"/>
<rect x="146.03" y="207.5" width="8.3" height="3.75" fill="#fff" stroke="#00d200" stroke-width="1.1"/>
<line x1="163.35" y1="172.25" x2="163.35" y2="220.5" stroke="#00d200" stroke-width="1.12"/>
<rect x="159.20" y="184.25" width="8.3" height="27.50" fill="#000" stroke="#00d200" stroke-width="1.1"/>
<line x1="176.51" y1="151.25" x2="176.51" y2="191.75" stroke="#00d200" stroke-width="1.12"/>
<rect x="172.36" y="180.25" width="8.3" height="3.25" fill="#000" stroke="#00d200" stroke-width="1.1"/>
<line x1="189.68" y1="174.25" x2="189.68" y2="230.5" stroke="#00d200" stroke-width="1.12"/>
<rect x="185.53" y="181" width="8.3" height="49.00" fill="#fff" stroke="#00d200" stroke-width="1.1"/>
<line x1="202.84" y1="215.5" x2="202.84" y2="251.25" stroke="#00d200" stroke-width="1.12"/>
<rect x="198.69" y="222.5" width="8.3" height="8.00" fill="#000" stroke="#00d200" stroke-width="1.1"/>
<line x1="216.01" y1="206.75" x2="216.01" y2="234.5" stroke="#00d200" stroke-width="1.12"/>
<rect x="211.86" y="209.25" width="8.3" height="12.00" fill="#000" stroke="#00d200" stroke-width="1.1"/>
<line x1="229.17" y1="187.5" x2="229.17" y2="230" stroke="#00d200" stroke-width="1.12"/>
<rect x="225.02" y="209.25" width="8.3" height="18.25" fill="#fff" stroke="#00d200" stroke-width="1.1"/>
<line x1="242.34" y1="218" x2="242.34" y2="245.5" stroke="#00d200" stroke-width="1.12"/>
<rect x="238.19" y="224.75" width="8.3" height="10.75" fill="#fff" stroke="#00d200" stroke-width="1.1"/>
<line x1="255.50" y1="224.25" x2="255.50" y2="265.5" stroke="#00d200" stroke-width="1.12"/>
<rect x="251.35" y="237.5" width="8.3" height="24.25" fill="#fff" stroke="#00d200" stroke-width="1.1"/>
<line x1="268.67" y1="254.25" x2="268.67" y2="290" stroke="#00d200" stroke-width="1.12"/>
<rect x="264.52" y="262" width="8.3" height="26.00" fill="#fff" stroke="#00d200" stroke-width="1.1"/>
<line x1="281.83" y1="258" x2="281.83" y2="310" stroke="#00d200" stroke-width="1.12"/>
<rect x="277.69" y="269.5" width="8.3" height="17.00" fill="#000" stroke="#00d200" stroke-width="1.1"/>
<line x1="295.00" y1="208.25" x2="295.00" y2="279.5" stroke="#00d200" stroke-width="1.12"/>
<rect x="290.85" y="213.75" width="8.3" height="53.75" fill="#000" stroke="#00d200" stroke-width="1.1"/>
<line x1="308.16" y1="202.5" x2="308.16" y2="234.25" stroke="#00d200" stroke-width="1.12"/>
<rect x="304.01" y="215.75" width="8.3" height="15.00" fill="#fff" stroke="#00d200" stroke-width="1.1"/>
<line x1="321.33" y1="221.25" x2="321.33" y2="241.75" stroke="#00d200" stroke-width="1.12"/>
<rect x="317.18" y="229.5" width="8.3" height="3.75" fill="#fff" stroke="#00d200" stroke-width="1.1"/>
<line x1="334.50" y1="231.25" x2="334.50" y2="260" stroke="#00d200" stroke-width="1.12"/>
<rect x="330.35" y="233.25" width="8.3" height="21.75" fill="#fff" stroke="#00d200" stroke-width="1.1"/>
<line x1="347.66" y1="144.25" x2="347.66" y2="260.5" stroke="#00d200" stroke-width="1.12"/>
<rect x="343.51" y="254.5" width="8.3" height="3.50" fill="#fff" stroke="#00d200" stroke-width="1.1"/>
<line x1="360.82" y1="256.25" x2="360.82" y2="297" stroke="#00d200" stroke-width="1.12"/>
<rect x="356.68" y="258" width="8.3" height="17.00" fill="#fff" stroke="#00d200" stroke-width="1.1"/>
<line x1="373.99" y1="272" x2="373.99" y2="317.5" stroke="#00d200" stroke-width="1.12"/>
<rect x="369.84" y="275" width="8.3" height="42.50" fill="#fff" stroke="#00d200" stroke-width="1.1"/>
<line x1="387.15" y1="312.5" x2="387.15" y2="330.75" stroke="#00d200" stroke-width="1.12"/>
<rect x="383.00" y="316.25" width="8.3" height="6.75" fill="#fff" stroke="#00d200" stroke-width="1.1"/>
<line x1="400.32" y1="323.5" x2="400.32" y2="396.5" stroke="#00d200" stroke-width="1.12"/>
<rect x="396.17" y="323.75" width="8.3" height="72.50" fill="#fff" stroke="#00d200" stroke-width="1.1"/>
<line x1="413.48" y1="356.25" x2="413.48" y2="398" stroke="#00d200" stroke-width="1.12"/>
<rect x="409.33" y="365" width="8.3" height="33.00" fill="#000" stroke="#00d200" stroke-width="1.1"/>
<line x1="426.65" y1="356.75" x2="426.65" y2="383" stroke="#00d200" stroke-width="1.12"/>
<rect x="422.50" y="365" width="8.3" height="5.00" fill="#fff" stroke="#00d200" stroke-width="1.1"/>
<line x1="439.81" y1="366.25" x2="439.81" y2="391.75" stroke="#00d200" stroke-width="1.12"/>
<rect x="435.67" y="370" width="8.3" height="12.00" fill="#fff" stroke="#00d200" stroke-width="1.1"/>
<line x1="452.98" y1="357.5" x2="452.98" y2="386.25" stroke="#00d200" stroke-width="1.12"/>
<rect x="448.83" y="367.5" width="8.3" height="15.00" fill="#000" stroke="#00d200" stroke-width="1.1"/>
<line x1="466.14" y1="342" x2="466.14" y2="370.5" stroke="#00d200" stroke-width="1.12"/>
<rect x="462.00" y="356.25" width="8.3" height="11.75" fill="#000" stroke="#00d200" stroke-width="1.1"/>
<line x1="479.31" y1="351.75" x2="479.31" y2="373.75" stroke="#00d200" stroke-width="1.12"/>
<rect x="475.16" y="355" width="8.3" height="4.25" fill="#fff" stroke="#00d200" stroke-width="1.1"/>
<line x1="492.47" y1="335.75" x2="492.47" y2="359.5" stroke="#00d200" stroke-width="1.12"/>
<rect x="488.32" y="342.5" width="8.3" height="15.75" fill="#000" stroke="#00d200" stroke-width="1.1"/>
<line x1="505.64" y1="333.75" x2="505.64" y2="359.5" stroke="#00d200" stroke-width="1.12"/>
<rect x="501.49" y="342.5" width="8.3" height="1.25" fill="#fff" stroke="#00d200" stroke-width="1.1"/>
<line x1="518.80" y1="340.5" x2="518.80" y2="372.5" stroke="#00d200" stroke-width="1.12"/>
<rect x="514.65" y="342.5" width="8.3" height="16.75" fill="#fff" stroke="#00d200" stroke-width="1.1"/>
<line x1="531.97" y1="327" x2="531.97" y2="367" stroke="#00d200" stroke-width="1.12"/>
<rect x="527.82" y="332" width="8.3" height="26.25" fill="#000" stroke="#00d200" stroke-width="1.1"/>
<line x1="545.13" y1="325.5" x2="545.13" y2="356.25" stroke="#00d200" stroke-width="1.12"/>
<rect x="540.99" y="331.25" width="8.3" height="15.50" fill="#fff" stroke="#00d200" stroke-width="1.1"/>
<line x1="558.30" y1="337.5" x2="558.30" y2="360" stroke="#00d200" stroke-width="1.12"/>
<rect x="554.15" y="347.5" width="8.3" height="7.50" fill="#fff" stroke="#00d200" stroke-width="1.1"/>
<line x1="571.46" y1="345.75" x2="571.46" y2="360.5" stroke="#00d200" stroke-width="1.12"/>
<rect x="567.31" y="349.25" width="8.3" height="6.50" fill="#000" stroke="#00d200" stroke-width="1.1"/>
<line x1="584.63" y1="311.25" x2="584.63" y2="354.5" stroke="#00d200" stroke-width="1.12"/>
<rect x="580.48" y="313.75" width="8.3" height="33.00" fill="#000" stroke="#00d200" stroke-width="1.1"/>
<line x1="597.79" y1="301.25" x2="597.79" y2="336.25" stroke="#00d200" stroke-width="1.12"/>
<rect x="593.64" y="313.75" width="8.3" height="10.50" fill="#fff" stroke="#00d200" stroke-width="1.1"/>
<line x1="610.96" y1="319.5" x2="610.96" y2="347" stroke="#00d200" stroke-width="1.12"/>
<rect x="606.81" y="325.5" width="8.3" height="14.50" fill="#fff" stroke="#00d200" stroke-width="1.1"/>
<line x1="624.12" y1="333" x2="624.12" y2="350" stroke="#00d200" stroke-width="1.12"/>
<rect x="619.98" y="337.5" width="8.3" height="3.00" fill="#000" stroke="#00d200" stroke-width="1.1"/>
<line x1="637.29" y1="322.5" x2="637.29" y2="343.75" stroke="#00d200" stroke-width="1.12"/>
<rect x="633.14" y="323.75" width="8.3" height="14.50" fill="#000" stroke="#00d200" stroke-width="1.1"/>
<line x1="650.45" y1="315.5" x2="650.45" y2="342.5" stroke="#00d200" stroke-width="1.12"/>
<rect x="646.30" y="324.5" width="8.3" height="14.75" fill="#fff" stroke="#00d200" stroke-width="1.1"/>
<line x1="663.62" y1="330.75" x2="663.62" y2="343.25" stroke="#00d200" stroke-width="1.12"/>
<rect x="659.47" y="331.75" width="8.3" height="5.25" fill="#000" stroke="#00d200" stroke-width="1.1"/>
<line x1="676.78" y1="317.5" x2="676.78" y2="340.5" stroke="#00d200" stroke-width="1.12"/>
<rect x="672.63" y="326.25" width="8.3" height="6.25" fill="#000" stroke="#00d200" stroke-width="1.1"/>
<line x1="689.95" y1="309.25" x2="689.95" y2="330.5" stroke="#00d200" stroke-width="1.12"/>
<rect x="685.80" y="313.25" width="8.3" height="13.00" fill="#000" stroke="#00d200" stroke-width="1.1"/>
<line x1="703.12" y1="311.25" x2="703.12" y2="328.75" stroke="#00d200" stroke-width="1.12"/>
<rect x="698.97" y="311.25" width="8.3" height="3.25" fill="#000" stroke="#00d200" stroke-width="1.1"/>
<line x1="716.28" y1="311" x2="716.28" y2="326.5" stroke="#00d200" stroke-width="1.12"/>
<rect x="712.13" y="311.25" width="8.3" height="15.00" fill="#fff" stroke="#00d200" stroke-width="1.1"/>
<line x1="729.44" y1="305.5" x2="729.44" y2="337.5" stroke="#00d200" stroke-width="1.12"/>
<rect x="725.29" y="307.5" width="8.3" height="18.00" fill="#000" stroke="#00d200" stroke-width="1.1"/>
<line x1="742.61" y1="307.5" x2="742.61" y2="332.5" stroke="#00d200" stroke-width="1.12"/>
<rect x="738.46" y="309.25" width="8.3" height="15.00" fill="#fff" stroke="#00d200" stroke-width="1.1"/>
<line x1="755.77" y1="322.5" x2="755.77" y2="348.75" stroke="#00d200" stroke-width="1.12"/>
<rect x="751.62" y="325.5" width="8.3" height="15.25" fill="#fff" stroke="#00d200" stroke-width="1.1"/>
<line x1="768.94" y1="339.25" x2="768.94" y2="357" stroke="#00d200" stroke-width="1.12"/>
<rect x="764.79" y="340" width="8.3" height="3.25" fill="#fff" stroke="#00d200" stroke-width="1.1"/>
<line x1="782.10" y1="330.75" x2="782.10" y2="357.5" stroke="#00d200" stroke-width="1.12"/>
<rect x="777.95" y="338.75" width="8.3" height="6.75" fill="#000" stroke="#00d200" stroke-width="1.1"/>
<line x1="795.27" y1="315" x2="795.27" y2="340.5" stroke="#00d200" stroke-width="1.12"/>
<rect x="791.12" y="332" width="8.3" height="5.50" fill="#000" stroke="#00d200" stroke-width="1.1"/>
<line x1="808.43" y1="307" x2="808.43" y2="356.25" stroke="#00d200" stroke-width="1.12"/>
<rect x="804.28" y="325.5" width="8.3" height="8.75" fill="#000" stroke="#00d200" stroke-width="1.1"/>
<line x1="821.60" y1="313.75" x2="821.60" y2="333.25" stroke="#00d200" stroke-width="1.12"/>
<rect x="817.45" y="315.5" width="8.3" height="10.00" fill="#000" stroke="#00d200" stroke-width="1.1"/>
<line x1="834.76" y1="297.5" x2="834.76" y2="315.5" stroke="#00d200" stroke-width="1.12"/>
<rect x="830.62" y="298.25" width="8.3" height="15.50" fill="#000" stroke="#00d200" stroke-width="1.1"/>
<line x1="847.93" y1="295.75" x2="847.93" y2="318.25" stroke="#00d200" stroke-width="1.12"/>
<rect x="843.78" y="296.75" width="8.3" height="10.00" fill="#fff" stroke="#00d200" stroke-width="1.1"/>
<line x1="861.09" y1="303.75" x2="861.09" y2="326.75" stroke="#00d200" stroke-width="1.12"/>
<rect x="856.94" y="305.5" width="8.3" height="3.25" fill="#fff" stroke="#00d200" stroke-width="1.1"/>
<line x1="874.26" y1="306.25" x2="874.26" y2="320" stroke="#00d200" stroke-width="1.12"/>
<rect x="870.11" y="308.75" width="8.3" height="3.25" fill="#fff" stroke="#00d200" stroke-width="1.1"/>
<line x1="887.42" y1="305.5" x2="887.42" y2="354.5" stroke="#00d200" stroke-width="1.12"/>
<rect x="883.27" y="310.75" width="8.3" height="38.50" fill="#fff" stroke="#00d200" stroke-width="1.1"/>
<line x1="900.59" y1="343.75" x2="900.59" y2="355" stroke="#00d200" stroke-width="1.12"/>
<rect x="896.44" y="347.5" width="8.3" height="3.00" fill="#fff" stroke="#00d200" stroke-width="1.1"/>
<line x1="913.75" y1="230.75" x2="913.75" y2="351.75" stroke="#00d200" stroke-width="1.12"/>
<rect x="909.61" y="234.25" width="8.3" height="115.00" fill="#000" stroke="#00d200" stroke-width="1.1"/>
<line x1="926.92" y1="203.75" x2="926.92" y2="253" stroke="#00d200" stroke-width="1.12"/>
<rect x="922.77" y="234.25" width="8.3" height="11.25" fill="#fff" stroke="#00d200" stroke-width="1.1"/>
<line x1="940.08" y1="232.5" x2="940.08" y2="267.5" stroke="#00d200" stroke-width="1.12"/>
<rect x="935.93" y="240.5" width="8.3" height="5.75" fill="#000" stroke="#00d200" stroke-width="1.1"/>
<line x1="953.25" y1="229.25" x2="953.25" y2="278.75" stroke="#00d200" stroke-width="1.12"/>
<rect x="949.10" y="241.75" width="8.3" height="32.50" fill="#fff" stroke="#00d200" stroke-width="1.1"/>
</g>
<line x1="4.5" y1="90" x2="984.5" y2="90" stroke="#c4c4c4" stroke-width="1"/>
<line x1="4.5" y1="90" x2="4.5" y2="414.8" stroke="#c4c4c4" stroke-width="1"/>
<line x1="984" y1="90" x2="984" y2="412.2" stroke="#b4b4b4" stroke-width="1.3"/>
<line x1="4.5" y1="411.6" x2="984.5" y2="411.6" stroke="#c4c4c4" stroke-width="1"/>
<line x1="984.5" y1="109.85" x2="986.5" y2="109.85" stroke="#c4c4c4" stroke-width="1"/>
<text x="988.2" y="112.65" class="ax" textLength="26.6" lengthAdjust="spacingAndGlyphs">0.95695</text>
<line x1="984.5" y1="139.62" x2="986.5" y2="139.62" stroke="#c4c4c4" stroke-width="1"/>
<text x="988.2" y="142.42" class="ax" textLength="26.6" lengthAdjust="spacingAndGlyphs">0.95655</text>
<line x1="984.5" y1="169.39" x2="986.5" y2="169.39" stroke="#c4c4c4" stroke-width="1"/>
<text x="988.2" y="172.19" class="ax" textLength="26.6" lengthAdjust="spacingAndGlyphs">0.95615</text>
<line x1="984.5" y1="199.16" x2="986.5" y2="199.16" stroke="#c4c4c4" stroke-width="1"/>
<text x="988.2" y="201.96" class="ax" textLength="26.6" lengthAdjust="spacingAndGlyphs">0.95575</text>
<line x1="984.5" y1="228.93" x2="986.5" y2="228.93" stroke="#c4c4c4" stroke-width="1"/>
<text x="988.2" y="231.73" class="ax" textLength="26.6" lengthAdjust="spacingAndGlyphs">0.95535</text>
<line x1="984.5" y1="258.70" x2="986.5" y2="258.70" stroke="#c4c4c4" stroke-width="1"/>
<text x="988.2" y="261.50" class="ax" textLength="26.6" lengthAdjust="spacingAndGlyphs">0.95495</text>
<line x1="984.5" y1="288.47" x2="986.5" y2="288.47" stroke="#c4c4c4" stroke-width="1"/>
<text x="988.2" y="291.27" class="ax" textLength="26.6" lengthAdjust="spacingAndGlyphs">0.95455</text>
<line x1="984.5" y1="318.24" x2="986.5" y2="318.24" stroke="#c4c4c4" stroke-width="1"/>
<text x="988.2" y="321.04" class="ax" textLength="26.6" lengthAdjust="spacingAndGlyphs">0.95415</text>
<line x1="984.5" y1="348.01" x2="986.5" y2="348.01" stroke="#c4c4c4" stroke-width="1"/>
<text x="988.2" y="350.81" class="ax" textLength="26.6" lengthAdjust="spacingAndGlyphs">0.95375</text>
<line x1="984.5" y1="377.78" x2="986.5" y2="377.78" stroke="#c4c4c4" stroke-width="1"/>
<text x="988.2" y="380.58" class="ax" textLength="26.6" lengthAdjust="spacingAndGlyphs">0.95335</text>
<line x1="984.5" y1="407.55" x2="986.5" y2="407.55" stroke="#c4c4c4" stroke-width="1"/>
<text x="988.2" y="410.35" class="ax" textLength="26.6" lengthAdjust="spacingAndGlyphs">0.95295</text>
<rect x="986" y="270.3" width="32.5" height="8.4" fill="#fff"/>
<text x="988.2" y="277.3" class="ax" style="fill:#000" textLength="26.6" lengthAdjust="spacingAndGlyphs">0.95474</text>
<line x1="5.37" y1="412" x2="5.37" y2="414.8" stroke="#c4c4c4" stroke-width="1"/>
<text x="3.80" y="422.1" class="ax" style="font-size:7.9px" textLength="42" lengthAdjust="spacingAndGlyphs">27 Mar 2026</text>
<line x1="58.03" y1="412" x2="58.03" y2="414.8" stroke="#c4c4c4" stroke-width="1"/>
<text x="56.83" y="422.1" class="ax" style="font-size:7.9px" textLength="44.4" lengthAdjust="spacingAndGlyphs">27 Mar 17:15</text>
<line x1="110.69" y1="412" x2="110.69" y2="414.8" stroke="#c4c4c4" stroke-width="1"/>
<text x="109.49" y="422.1" class="ax" style="font-size:7.9px" textLength="44.4" lengthAdjust="spacingAndGlyphs">27 Mar 17:35</text>
<line x1="163.35" y1="412" x2="163.35" y2="414.8" stroke="#c4c4c4" stroke-width="1"/>
<text x="162.15" y="422.1" class="ax" style="font-size:7.9px" textLength="44.4" lengthAdjust="spacingAndGlyphs">27 Mar 17:55</text>
<line x1="216.01" y1="412" x2="216.01" y2="414.8" stroke="#c4c4c4" stroke-width="1"/>
<text x="214.81" y="422.1" class="ax" style="font-size:7.9px" textLength="44.4" lengthAdjust="spacingAndGlyphs">27 Mar 18:15</text>
<line x1="268.67" y1="412" x2="268.67" y2="414.8" stroke="#c4c4c4" stroke-width="1"/>
<text x="267.47" y="422.1" class="ax" style="font-size:7.9px" textLength="44.4" lengthAdjust="spacingAndGlyphs">27 Mar 18:35</text>
<line x1="321.33" y1="412" x2="321.33" y2="414.8" stroke="#c4c4c4" stroke-width="1"/>
<text x="320.13" y="422.1" class="ax" style="font-size:7.9px" textLength="44.4" lengthAdjust="spacingAndGlyphs">27 Mar 18:55</text>
<line x1="373.99" y1="412" x2="373.99" y2="414.8" stroke="#c4c4c4" stroke-width="1"/>
<text x="372.79" y="422.1" class="ax" style="font-size:7.9px" textLength="44.4" lengthAdjust="spacingAndGlyphs">27 Mar 19:15</text>
<line x1="426.65" y1="412" x2="426.65" y2="414.8" stroke="#c4c4c4" stroke-width="1"/>
<text x="425.45" y="422.1" class="ax" style="font-size:7.9px" textLength="44.4" lengthAdjust="spacingAndGlyphs">27 Mar 19:35</text>
<line x1="479.31" y1="412" x2="479.31" y2="414.8" stroke="#c4c4c4" stroke-width="1"/>
<text x="478.11" y="422.1" class="ax" style="font-size:7.9px" textLength="44.4" lengthAdjust="spacingAndGlyphs">27 Mar 19:55</text>
<line x1="531.97" y1="412" x2="531.97" y2="414.8" stroke="#c4c4c4" stroke-width="1"/>
<text x="530.77" y="422.1" class="ax" style="font-size:7.9px" textLength="44.4" lengthAdjust="spacingAndGlyphs">27 Mar 20:15</text>
<line x1="584.63" y1="412" x2="584.63" y2="414.8" stroke="#c4c4c4" stroke-width="1"/>
<text x="583.43" y="422.1" class="ax" style="font-size:7.9px" textLength="44.4" lengthAdjust="spacingAndGlyphs">27 Mar 20:35</text>
<line x1="637.29" y1="412" x2="637.29" y2="414.8" stroke="#c4c4c4" stroke-width="1"/>
<text x="636.09" y="422.1" class="ax" style="font-size:7.9px" textLength="44.4" lengthAdjust="spacingAndGlyphs">27 Mar 20:55</text>
<line x1="689.95" y1="412" x2="689.95" y2="414.8" stroke="#c4c4c4" stroke-width="1"/>
<text x="688.75" y="422.1" class="ax" style="font-size:7.9px" textLength="44.4" lengthAdjust="spacingAndGlyphs">27 Mar 21:15</text>
<line x1="742.61" y1="412" x2="742.61" y2="414.8" stroke="#c4c4c4" stroke-width="1"/>
<text x="741.41" y="422.1" class="ax" style="font-size:7.9px" textLength="44.4" lengthAdjust="spacingAndGlyphs">27 Mar 21:35</text>
<line x1="795.27" y1="412" x2="795.27" y2="414.8" stroke="#c4c4c4" stroke-width="1"/>
<text x="794.07" y="422.1" class="ax" style="font-size:7.9px" textLength="44.4" lengthAdjust="spacingAndGlyphs">27 Mar 21:55</text>
<line x1="847.93" y1="412" x2="847.93" y2="414.8" stroke="#c4c4c4" stroke-width="1"/>
<text x="846.73" y="422.1" class="ax" style="font-size:7.9px" textLength="44.4" lengthAdjust="spacingAndGlyphs">27 Mar 22:15</text>
<line x1="900.59" y1="412" x2="900.59" y2="414.8" stroke="#c4c4c4" stroke-width="1"/>
<text x="899.39" y="422.1" class="ax" style="font-size:7.9px" textLength="44.4" lengthAdjust="spacingAndGlyphs">27 Mar 22:35</text>
<line x1="953.25" y1="412" x2="953.25" y2="414.8" stroke="#c4c4c4" stroke-width="1"/>
<text x="952.05" y="422.1" class="ax" style="font-size:7.9px" textLength="44.4" lengthAdjust="spacingAndGlyphs">27 Mar 22:55</text>
<text x="50.6" y="123.3" class="ax" style="font-size:8.1px">buy 0.04</text>
<text x="50.6" y="321.6" class="ax" style="font-size:8.1px">sell 0.04</text>
<path d="M7.2 95.3 L13.2 95.3 L10.2 99 Z" fill="#fff"/>
<text x="17" y="100" class="ax" style="font-size:8.1px">AUDCAD,M5</text>
<text x="902.5" y="100.6" class="ax" style="font-size:8.4px" textLength="66" lengthAdjust="spacingAndGlyphs">BALANCEA_Ver.S</text>
<circle cx="974.7" cy="97.7" r="4.6" fill="none" stroke="#e8e8e8" stroke-width="0.9"/>
<circle cx="973" cy="96.3" r="0.7" fill="#e8e8e8"/><circle cx="976.4" cy="96.3" r="0.7" fill="#e8e8e8"/>
<path d="M972.2 98.6 Q974.7 101.4 977.2 98.6" fill="none" stroke="#e8e8e8" stroke-width="0.8"/></svg>
<svg class="bot" width="1024" height="218" viewBox="0 428 1024 218" font-family='"Liberation Sans","Noto Sans CJK JP",sans-serif' style="position:absolute;left:0;top:428px">
<rect x="0" y="428.5" width="1024" height="218" fill="#f0f0f0"/>
<rect x="1.5" y="443.8" width="11" height="180" fill="#c9d9eb"/>
<path d="M4 435.2 l4.6 4.6 M8.6 435.2 l-4.6 4.6" stroke="#111" stroke-width="1.3"/>
<text transform="translate(11 621.2) rotate(-90)" font-size="10" fill="#222" textLength="36.4" lengthAdjust="spacingAndGlyphs">ターミナル</text>
<rect x="13" y="433" width="1007.5" height="172.5" fill="#ffffff"/>
<line x1="13" y1="433" x2="1020.5" y2="433" stroke="#a8a8a8" stroke-width="1"/>
<line x1="13.3" y1="433" x2="13.3" y2="605" stroke="#b8b8b8" stroke-width="1"/>
<rect x="13.8" y="470.3" width="1006.4" height="16" fill="#ececec"/>
<rect x="13.8" y="486.3" width="1006.4" height="16.2" fill="#cbcbcb"/>
<line x1="13.8" y1="453.3" x2="1020" y2="453.3" stroke="#d8d8d8" stroke-width="1"/>
<line x1="13.8" y1="470.2" x2="1020" y2="470.2" stroke="#d8d8d8" stroke-width="1"/>
<line x1="113" y1="434" x2="113" y2="486.3" stroke="#d6d6d6" stroke-width="1"/>
<line x1="250.6" y1="434" x2="250.6" y2="486.3" stroke="#d6d6d6" stroke-width="1"/>
<line x1="318.8" y1="434" x2="318.8" y2="486.3" stroke="#d6d6d6" stroke-width="1"/>
<line x1="372" y1="434" x2="372" y2="486.3" stroke="#d6d6d6" stroke-width="1"/>
<line x1="440" y1="434" x2="440" y2="486.3" stroke="#d6d6d6" stroke-width="1"/>
<line x1="516.8" y1="434" x2="516.8" y2="486.3" stroke="#d6d6d6" stroke-width="1"/>
<line x1="593.5" y1="434" x2="593.5" y2="486.3" stroke="#d6d6d6" stroke-width="1"/>
<line x1="670.3" y1="434" x2="670.3" y2="486.3" stroke="#d6d6d6" stroke-width="1"/>
<line x1="746.8" y1="434" x2="746.8" y2="486.3" stroke="#d6d6d6" stroke-width="1"/>
<line x1="822.5" y1="434" x2="822.5" y2="486.3" stroke="#d6d6d6" stroke-width="1"/>
<line x1="899.8" y1="434" x2="899.8" y2="486.3" stroke="#d6d6d6" stroke-width="1"/>
<text x="19.5" y="447.8" font-size="9.9" fill="#000" textLength="38.5" lengthAdjust="spacingAndGlyphs">注文番号</text>
<path d="M68.4 446.4 l2.6 -5" stroke="#7a7a7a" stroke-width="0.8"/>
<text x="228.4" y="447.8" font-size="9.9" fill="#000" textLength="19" lengthAdjust="spacingAndGlyphs">時間</text>
<text x="275.7" y="447.8" font-size="9.9" fill="#000" textLength="38.8" lengthAdjust="spacingAndGlyphs">取引種別</text>
<text x="348.7" y="447.8" font-size="9.9" fill="#000" textLength="18.8" lengthAdjust="spacingAndGlyphs">数量</text>
<text x="401.3" y="447.8" font-size="9.9" fill="#000" textLength="35" lengthAdjust="spacingAndGlyphs">通貨ペア</text>
<text x="493.3" y="447.8" font-size="9.9" fill="#000" textLength="19" lengthAdjust="spacingAndGlyphs">価格</text>
<text x="524.8" y="447.8" font-size="9.9" fill="#000" textLength="67.5" lengthAdjust="spacingAndGlyphs">決済逆指値(S...</text>
<text x="606.0" y="447.8" font-size="9.9" fill="#000" textLength="59.5" lengthAdjust="spacingAndGlyphs">決済指値(T/P)</text>
<text x="723.0" y="447.8" font-size="9.9" fill="#000" textLength="19.3" lengthAdjust="spacingAndGlyphs">価格</text>
<text x="790.5" y="447.8" font-size="9.9" fill="#000" textLength="27.5" lengthAdjust="spacingAndGlyphs">手数料</text>
<text x="867.2" y="447.8" font-size="9.9" fill="#000" textLength="28.8" lengthAdjust="spacingAndGlyphs">スワップ</text>
<text x="995.5" y="447.8" font-size="9.9" fill="#000" textLength="18.8" lengthAdjust="spacingAndGlyphs">損益</text>
<text x="166.8" y="465.1" font-size="10" fill="#1a1a1a" textLength="80.8" lengthAdjust="spacingAndGlyphs">2026.03.27 06:05:01</text>
<text x="300.0" y="465.1" font-size="10" fill="#1a1a1a" textLength="15.5" lengthAdjust="spacingAndGlyphs">buy</text>
<text x="352.5" y="465.1" font-size="10" fill="#1a1a1a" textLength="17" lengthAdjust="spacingAndGlyphs">0.04</text>
<text x="406.2" y="465.1" font-size="10" fill="#1a1a1a" textLength="31.3" lengthAdjust="spacingAndGlyphs">audcad</text>
<text x="482.6" y="465.1" font-size="10" fill="#1a1a1a" textLength="32.2" lengthAdjust="spacingAndGlyphs">0.95674</text>
<text x="559.2" y="465.1" font-size="10" fill="#1a1a1a" textLength="31.8" lengthAdjust="spacingAndGlyphs">0.00000</text>
<text x="636.0" y="465.1" font-size="10" fill="#1a1a1a" textLength="31.8" lengthAdjust="spacingAndGlyphs">0.00000</text>
<text x="712.2" y="465.1" font-size="10" fill="#1a1a1a" textLength="31.8" lengthAdjust="spacingAndGlyphs">0.95474</text>
<text x="816.1" y="465.1" font-size="10" fill="#1a1a1a" textLength="4.9" lengthAdjust="spacingAndGlyphs">0</text>
<text x="893.1" y="465.1" font-size="10" fill="#1a1a1a" textLength="4.9" lengthAdjust="spacingAndGlyphs">0</text>
<text x="982.2" y="465.1" font-size="10" fill="#1a1a1a" textLength="17.8" lengthAdjust="spacingAndGlyphs">-923</text>
<path d="M1008.6 459.1 l5 5 M1013.6 459.1 l-5 5" stroke="#9c9c9c" stroke-width="1.5"/>
<text x="166.8" y="481.3" font-size="10" fill="#1a1a1a" textLength="80.8" lengthAdjust="spacingAndGlyphs">2026.03.27 09:35:00</text>
<text x="302.9" y="481.3" font-size="10" fill="#1a1a1a" textLength="12.6" lengthAdjust="spacingAndGlyphs">sell</text>
<text x="352.5" y="481.3" font-size="10" fill="#1a1a1a" textLength="17" lengthAdjust="spacingAndGlyphs">0.04</text>
<text x="406.2" y="481.3" font-size="10" fill="#1a1a1a" textLength="31.3" lengthAdjust="spacingAndGlyphs">audcad</text>
<text x="482.6" y="481.3" font-size="10" fill="#1a1a1a" textLength="32.2" lengthAdjust="spacingAndGlyphs">0.95408</text>
<text x="559.2" y="481.3" font-size="10" fill="#1a1a1a" textLength="31.8" lengthAdjust="spacingAndGlyphs">0.00000</text>
<text x="636.0" y="481.3" font-size="10" fill="#1a1a1a" textLength="31.8" lengthAdjust="spacingAndGlyphs">0.00000</text>
<text x="712.2" y="481.3" font-size="10" fill="#1a1a1a" textLength="31.8" lengthAdjust="spacingAndGlyphs">0.95559</text>
<text x="816.1" y="481.3" font-size="10" fill="#1a1a1a" textLength="4.9" lengthAdjust="spacingAndGlyphs">0</text>
<text x="893.1" y="481.3" font-size="10" fill="#1a1a1a" textLength="4.9" lengthAdjust="spacingAndGlyphs">0</text>
<text x="982.2" y="481.3" font-size="10" fill="#1a1a1a" textLength="17.8" lengthAdjust="spacingAndGlyphs">-697</text>
<path d="M1008.6 475.3 l5 5 M1013.6 475.3 l-5 5" stroke="#9c9c9c" stroke-width="1.5"/>
<path d="M16.8 456.4 h6 l2.6 2.6 v8.4 h-8.6z" fill="#fafafa" stroke="#7a7a7a" stroke-width="1"/>
<circle cx="25.2" cy="465.59999999999997" r="2.7" fill="#2a8be0" stroke="#2a8be0" stroke-width="0.4"/>
<path d="M16.8 472.4 h6 l2.6 2.6 v8.4 h-8.6z" fill="#fafafa" stroke="#7a7a7a" stroke-width="1"/>
<circle cx="25.2" cy="481.59999999999997" r="2.7" fill="#e0441e" stroke="#e0441e" stroke-width="0.4"/>
<rect x="16.6" y="489.4" width="9.6" height="10.4" rx="1.2" fill="#fdfdfd" stroke="#9a9a9a" stroke-width="0.8"/>
<path d="M20 491.6 h2.8 v3 h1.8 l-3.2 3.4 l-3.2 -3.4 h1.8z" fill="#e04a1e"/>
<text x="32.5" y="498.2" font-size="9.9" fill="#111" font-weight="bold" textLength="21.3" lengthAdjust="spacingAndGlyphs">残高:</text>
<text x="56.3" y="498.2" font-size="9.9" fill="#111" font-weight="bold" textLength="61.2" lengthAdjust="spacingAndGlyphs">1 256 332 JPY</text>
<text x="123.8" y="498.2" font-size="9.9" fill="#111" font-weight="bold" textLength="51.2" lengthAdjust="spacingAndGlyphs">有効証拠金:</text>
<text x="177.5" y="498.2" font-size="9.9" fill="#111" font-weight="bold" textLength="41.3" lengthAdjust="spacingAndGlyphs">1 254 712</text>
<text x="224.5" y="498.2" font-size="9.9" fill="#111" font-weight="bold" textLength="51.2" lengthAdjust="spacingAndGlyphs">余剰証拠金:</text>
<text x="278.8" y="498.2" font-size="9.9" fill="#111" font-weight="bold" textLength="40" lengthAdjust="spacingAndGlyphs">1 254 712</text>
<text x="973" y="498.2" font-size="9.9" fill="#111" font-weight="bold" textLength="27" lengthAdjust="spacingAndGlyphs">-1 620</text>
<line x1="51.8" y1="605.5" x2="1020.5" y2="605.5" stroke="#3c3c3c" stroke-width="1.1"/>
<path d="M15.6 605 V621 H51.5 V605" fill="#ffffff" stroke="#3c3c3c" stroke-width="1.1"/>
<rect x="16" y="603" width="35.2" height="4" fill="#ffffff"/>
<text x="24.3" y="616.5" font-size="9.8" fill="#000" textLength="17.7" lengthAdjust="spacingAndGlyphs">取引</text>
<text x="60" y="616.5" font-size="9.8" fill="#6a6a6a" textLength="38.8" lengthAdjust="spacingAndGlyphs">運用比率</text>
<text x="117" y="616.5" font-size="9.8" fill="#6a6a6a" textLength="38" lengthAdjust="spacingAndGlyphs">口座履歴</text>
<text x="172.5" y="616.5" font-size="9.8" fill="#6a6a6a" textLength="27.5" lengthAdjust="spacingAndGlyphs">ニュース</text>
<text x="216.3" y="616.5" font-size="9.8" fill="#6a6a6a" textLength="47.5" lengthAdjust="spacingAndGlyphs">アラーム設定</text>
<text x="281.3" y="616.5" font-size="9.8" fill="#6a6a6a" textLength="50" lengthAdjust="spacingAndGlyphs">メールボックス</text>
<text x="354.5" y="616.5" font-size="9.8" fill="#6a6a6a" textLength="33" lengthAdjust="spacingAndGlyphs">マーケット</text>
<text x="419.5" y="616.5" font-size="9.8" fill="#6a6a6a" textLength="17.5" lengthAdjust="spacingAndGlyphs">記事</text>
<text x="465" y="616.5" font-size="9.8" fill="#6a6a6a" textLength="33.8" lengthAdjust="spacingAndGlyphs">ライブラリ</text>
<text x="516" y="616.5" font-size="9.8" fill="#6a6a6a" textLength="43.5" lengthAdjust="spacingAndGlyphs">エキスパート</text>
<text x="576" y="616.5" font-size="9.8" fill="#6a6a6a" textLength="38.5" lengthAdjust="spacingAndGlyphs">操作履歴</text>
<line x1="108.5" y1="608.6" x2="108.5" y2="619.2" stroke="#707070" stroke-width="1"/>
<line x1="163.5" y1="608.6" x2="163.5" y2="619.2" stroke="#707070" stroke-width="1"/>
<line x1="208.5" y1="608.6" x2="208.5" y2="619.2" stroke="#707070" stroke-width="1"/>
<line x1="273.5" y1="608.6" x2="273.5" y2="619.2" stroke="#707070" stroke-width="1"/>
<line x1="346.5" y1="608.6" x2="346.5" y2="619.2" stroke="#707070" stroke-width="1"/>
<line x1="410.5" y1="608.6" x2="410.5" y2="619.2" stroke="#707070" stroke-width="1"/>
<line x1="456.5" y1="608.6" x2="456.5" y2="619.2" stroke="#707070" stroke-width="1"/>
<line x1="509.5" y1="608.6" x2="509.5" y2="619.2" stroke="#707070" stroke-width="1"/>
<line x1="567.5" y1="608.6" x2="567.5" y2="619.2" stroke="#707070" stroke-width="1"/>
<line x1="623.5" y1="608.6" x2="623.5" y2="619.2" stroke="#707070" stroke-width="1"/>
<text x="333.8" y="619.3" font-size="6.4" fill="#e02020">6</text>
<text x="390.5" y="619.3" font-size="6.4" fill="#e02020" textLength="10.8" lengthAdjust="spacingAndGlyphs">105</text>
<text x="440" y="619.3" font-size="6.4" fill="#e02020" textLength="8" lengthAdjust="spacingAndGlyphs">30</text>
<line x1="1" y1="625" x2="1023" y2="625" stroke="#d4d4d4" stroke-width="1"/>
<line x1="1" y1="626" x2="1023" y2="626" stroke="#fafafa" stroke-width="1"/>
<text x="3" y="640.2" font-size="9.9" fill="#000" textLength="114" lengthAdjust="spacingAndGlyphs">F1キーでヘルプが表示されます</text>
<line x1="438" y1="630" x2="438" y2="643.6" stroke="#b4b4b4" stroke-width="1"/>
<line x1="533.5" y1="630" x2="533.5" y2="643.6" stroke="#b4b4b4" stroke-width="1"/>
<line x1="618" y1="630" x2="618" y2="643.6" stroke="#b4b4b4" stroke-width="1"/>
<line x1="676" y1="630" x2="676" y2="643.6" stroke="#b4b4b4" stroke-width="1"/>
<line x1="734.5" y1="630" x2="734.5" y2="643.6" stroke="#b4b4b4" stroke-width="1"/>
<line x1="790.5" y1="630" x2="790.5" y2="643.6" stroke="#b4b4b4" stroke-width="1"/>
<line x1="847.3" y1="630" x2="847.3" y2="643.6" stroke="#b4b4b4" stroke-width="1"/>
<line x1="901.8" y1="630" x2="901.8" y2="643.6" stroke="#b4b4b4" stroke-width="1"/>
<text x="443.3" y="640.2" font-size="9.9" fill="#000" textLength="30.5" lengthAdjust="spacingAndGlyphs">Default</text>
<rect x="906.50" y="631.3" width="1.2" height="8.30" fill="#7f9016"/>
<rect x="906.50" y="639.60" width="1.2" height="2.40" fill="#17527e"/>
<rect x="908.50" y="631.3" width="1.2" height="7.50" fill="#7f9016"/>
<rect x="908.50" y="638.80" width="1.2" height="3.20" fill="#17527e"/>
<rect x="910.50" y="631.3" width="1.2" height="6.70" fill="#7f9016"/>
<rect x="910.50" y="638.00" width="1.2" height="4.00" fill="#17527e"/>
<rect x="912.50" y="631.3" width="1.2" height="5.90" fill="#7f9016"/>
<rect x="912.50" y="637.20" width="1.2" height="4.80" fill="#17527e"/>
<rect x="914.50" y="631.3" width="1.2" height="5.10" fill="#7f9016"/>
<rect x="914.50" y="636.40" width="1.2" height="5.60" fill="#17527e"/>
<rect x="916.50" y="631.3" width="1.2" height="4.30" fill="#7f9016"/>
<rect x="916.50" y="635.60" width="1.2" height="6.40" fill="#17527e"/>
<rect x="918.50" y="631.3" width="1.2" height="3.50" fill="#7f9016"/>
<rect x="918.50" y="634.80" width="1.2" height="7.20" fill="#17527e"/>
<rect x="920.50" y="631.3" width="1.2" height="2.70" fill="#7f9016"/>
<rect x="920.50" y="634.00" width="1.2" height="8.00" fill="#17527e"/>
<rect x="922.50" y="631.3" width="1.2" height="1.90" fill="#7f9016"/>
<rect x="922.50" y="633.20" width="1.2" height="8.80" fill="#17527e"/>
<rect x="924.50" y="631.3" width="1.2" height="1.10" fill="#7f9016"/>
<rect x="924.50" y="632.40" width="1.2" height="9.60" fill="#17527e"/>
<text x="929.3" y="640.2" font-size="9.9" fill="#000" textLength="60.7" lengthAdjust="spacingAndGlyphs">886841/616 kb</text>
<path d="M1012 643.6 L1021.6 634 M1015 643.6 L1021.6 637 M1018 643.6 L1021.6 640" stroke="#a8a8a8" stroke-width="0.9"/>
</svg>
<div style="position:absolute;left:0;top:0;width:1024px;height:646px;border-left:1px solid #3a4654;border-top:1px solid #3a4654;border-right:1.2px solid #3a4654;border-bottom:1px solid #3a4654;pointer-events:none"></div>
<div style="position:absolute;left:1px;top:644px;width:1022px;height:1px;background:#959ba3"></div>
</div></body></html>
